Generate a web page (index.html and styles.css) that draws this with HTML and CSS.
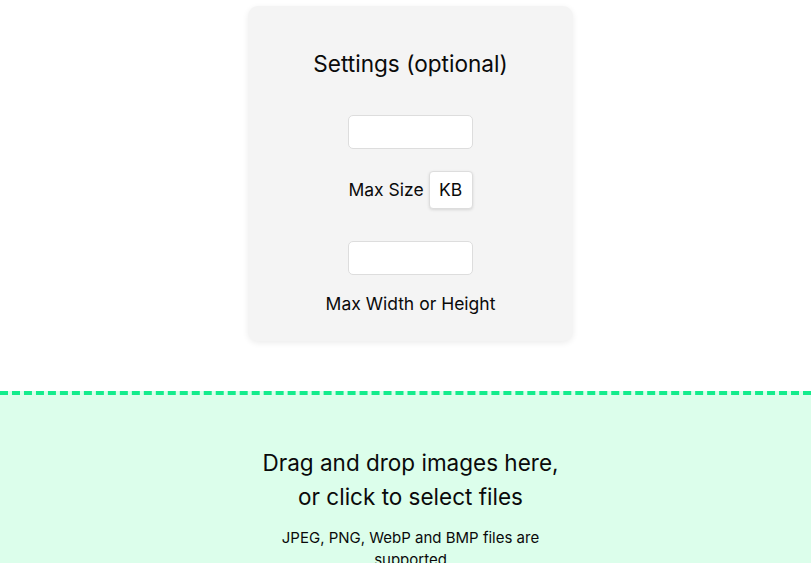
FILE: index.html
```html
<!DOCTYPE html>
<html lang="en">
<head>
    <meta charset="UTF-8">
    <meta name="viewport" content="width=device-width, initial-scale=1.0">
    <title>Image Compressor</title>
    <link rel="stylesheet" href="styles.css">
</head>
<body>
    <section class="settings">
        <h2>Settings (optional)</h2>
        <div class="field">
            <input type="number" id="max-size">
            <label for="max-size">Max Size <span class="unit">KB</span></label>
        </div>
        <div class="field">
            <input type="number" id="max-dim">
            <label for="max-dim">Max Width or Height</label>
        </div>
    </section>

    <div class="dropzone" id="dropzone">
        <div class="drop-text">
            <p class="drop-title">Drag and drop images here, or click to select files</p>
            <p class="drop-note">JPEG, PNG, WebP and BMP files are supported</p>
        </div>
    </div>
</body>
</html>
```

FILE: styles.css
```css
body {
    font-family: Inter, "Noto Sans", sans-serif;
    margin: 0;
    padding: 0;
    color: #0a0a0a;
    background-color: #fff;
}
.settings {
    width: 325px;
    box-sizing: border-box;
    margin: 6px auto 0;
    position: relative;
    left: 5px;
    padding: 36px 0 26px;
    background-color: #f4f4f4;
    border-radius: 10px;
    box-shadow: 0 2px 6px rgba(0, 0, 0, 0.08);
    text-align: center;
}
.settings h2 {
    font-size: 22.6px;
    font-weight: 400;
    margin: 0 0 29px;
    line-height: 44px;
}
.field {
    display: flex;
    flex-direction: column;
    align-items: center;
    margin-bottom: 32px;
}
.field:last-child {
    margin-bottom: 0;
}
.field input {
    width: 125px;
    height: 34px;
    box-sizing: border-box;
    border: 1px solid #ddd;
    border-radius: 5px;
    background-color: #fff;
    outline: none;
}
.field label {
    font-size: 17.5px;
    margin-top: 22px;
    line-height: 22px;
    display: flex;
    align-items: center;
    gap: 5px;
}
.field:last-child label {
    margin-top: 18px;
}
.unit {
    display: inline-block;
    width: 44px;
    height: 38px;
    box-sizing: border-box;
    line-height: 36px;
    border: 1px solid #ddd;
    border-radius: 4px;
    background-color: #fff;
    box-shadow: 0 1px 3px rgba(0, 0, 0, 0.12);
}
.dropzone {
    margin-top: 50px;
    border-top: 4px dashed #14ec8c;
    background-color: #dcfeeb;
    padding: 51px 0 0 10px;
    height: 117px;
}
.drop-text {
    width: 300px;
    margin: 0 auto;
    text-align: center;
}
.drop-title {
    font-size: 22.5px;
    line-height: 34px;
    margin: 0 0 13px;
}
.drop-note {
    font-size: 15px;
    line-height: 22px;
    margin: 0;
    padding: 0 20px;
}
```
